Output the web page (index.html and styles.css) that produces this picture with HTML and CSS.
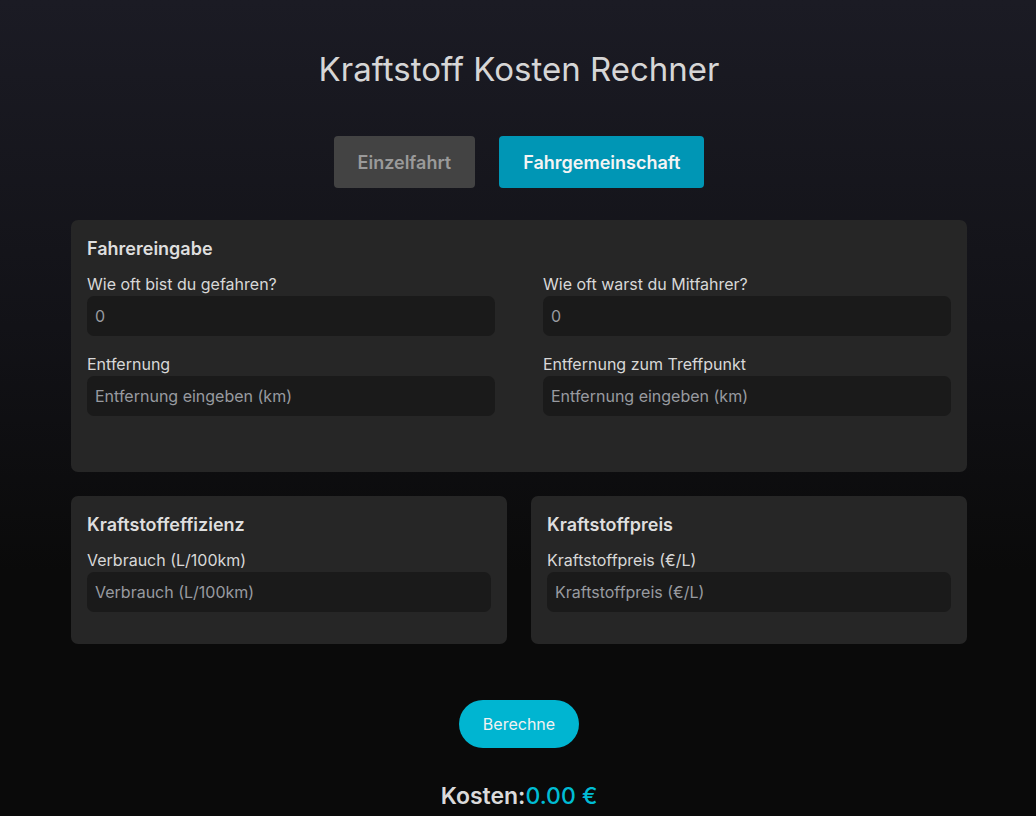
FILE: index.html
```html
<!DOCTYPE html>
<html lang="de">
<head>
<meta charset="utf-8">
<title>Kraftstoff Kosten Rechner</title>
<link rel="stylesheet" href="styles.css">
</head>
<body>
<main class="app">
  <h1 class="title">Kraftstoff Kosten Rechner</h1>
  <div class="modes">
    <button class="mode mode-off">Einzelfahrt</button>
    <button class="mode mode-on">Fahrgemeinschaft</button>
  </div>

  <section class="card card-wide">
    <h2 class="card-title">Fahrereingabe</h2>
    <div class="grid2">
      <div class="field">
        <label class="label">Wie oft bist du gefahren?</label>
        <input class="input" type="text" placeholder="0">
      </div>
      <div class="field">
        <label class="label">Wie oft warst du Mitfahrer?</label>
        <input class="input" type="text" placeholder="0">
      </div>
      <div class="field">
        <label class="label">Entfernung</label>
        <input class="input" type="text" placeholder="Entfernung eingeben (km)">
      </div>
      <div class="field">
        <label class="label">Entfernung zum Treffpunkt</label>
        <input class="input" type="text" placeholder="Entfernung eingeben (km)">
      </div>
    </div>
  </section>

  <div class="row">
    <section class="card">
      <h2 class="card-title">Kraftstoffeffizienz</h2>
      <div class="field">
        <label class="label">Verbrauch (L/100km)</label>
        <input class="input" type="text" placeholder="Verbrauch (L/100km)">
      </div>
    </section>
    <section class="card">
      <h2 class="card-title">Kraftstoffpreis</h2>
      <div class="field">
        <label class="label">Kraftstoffpreis (€/L)</label>
        <input class="input" type="text" placeholder="Kraftstoffpreis (€/L)">
      </div>
    </section>
  </div>

  <button class="calc">Berechne</button>
  <p class="result">Kosten:<span class="amount">0.00 €</span></p>
</main>
</body>
</html>
```

FILE: styles.css
```css
* { box-sizing: border-box; }
html, body { margin: 0; padding: 0; }
body {
  min-height: 816px;
  background: linear-gradient(180deg, #1b1b24 0%, #121217 40%, #0a0a0a 70%, #0a0a0a 100%);
  font-family: Inter, "Noto Sans", "Liberation Sans", sans-serif;
  color: #dcdcdc;
}
.app {
  width: 896px;
  margin: 0 auto;
  padding-top: 48px;
  display: flex;
  flex-direction: column;
  align-items: center;
  position: relative;
  left: 1px;
}
.title {
  margin: 0;
  font-size: 33px;
  line-height: 42px;
  font-weight: 400;
  color: #d6d6d6;
}
.modes {
  display: flex;
  gap: 24px;
  margin-top: 46px;
}
.mode {
  height: 52px;
  padding: 0 24px;
  border: none;
  border-radius: 4px;
  font-family: inherit;
  font-size: 18px;
  font-weight: 600;
}
.mode-off { background: #434343; color: #9a9a9a; }
.mode-on { background: #0096b5; color: #f4f4f4; }
.card {
  background: #262626;
  border-radius: 7px;
  padding: 16px;
  width: 100%;
}
.card-wide {
  margin-top: 32px;
  padding-bottom: 40px;
}
.card-title {
  margin: 0 0 10px;
  font-size: 18px;
  line-height: 26px;
  font-weight: 600;
  color: #dedede;
}
.grid2 {
  display: grid;
  grid-template-columns: 1fr 1fr;
  column-gap: 48px;
}
.field {
  display: flex;
  flex-direction: column;
  margin-bottom: 16px;
}
.label {
  font-size: 16px;
  line-height: 24px;
  color: #d8d8d8;
}
.input {
  height: 40px;
  border: none;
  border-radius: 7px;
  background: #1a1a1a;
  padding: 0 8px;
  font-family: inherit;
  font-size: 16px;
  color: #a0a2a8;
  outline: none;
}
.input::placeholder { color: #989aa0; }
.row {
  display: grid;
  grid-template-columns: 1fr 1fr;
  gap: 24px;
  width: 100%;
  margin-top: 24px;
}
.calc {
  margin-top: 56px;
  width: 120px;
  height: 48px;
  border: none;
  border-radius: 24px;
  background: #00b5d1;
  color: #f2f2f2;
  font-family: inherit;
  font-size: 16px;
}
.result {
  margin: 34px 0 0;
  font-size: 23px;
  line-height: 28px;
  font-weight: 600;
  color: #dadada;
}
.amount {
  color: #00bcd4;
  font-weight: 500;
}
```
